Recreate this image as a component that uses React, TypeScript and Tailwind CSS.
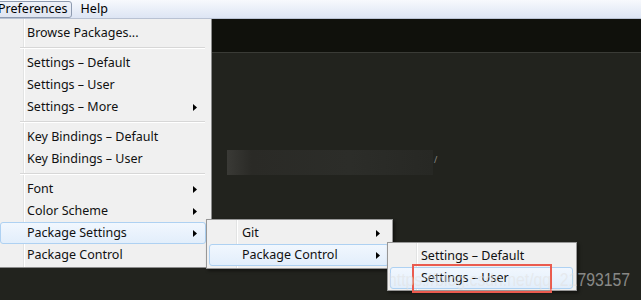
import React from "react";

type Item =
  | { kind: "item"; label: string; arrow?: boolean; active?: boolean }
  | { kind: "sep" };

function Arrow() {
  return (
    <svg width="4" height="7" viewBox="0 0 4 7" className="block">
      <path d="M0 0 L4 3.5 L0 7 Z" fill="#000" />
    </svg>
  );
}

function MenuRow({
  label,
  arrow,
  active,
  textLeft,
}: {
  label: string;
  arrow?: boolean;
  active?: boolean;
  textLeft: string;
}) {
  return (
    <div
      className={
        "relative h-[22px] flex items-center " +
        (active
          ? "rounded-[3px] border border-[#aed1f2] bg-[linear-gradient(#f1f7fe,#e2eefb)]"
          : "border border-transparent")
      }
    >
      <span className={"whitespace-nowrap text-[12.5px] text-[#111] " + textLeft}>{label}</span>
      {arrow && (
        <span className="ml-auto mr-[8px]">
          <Arrow />
        </span>
      )}
    </div>
  );
}

function Sep() {
  return (
    <div className="h-[8px] flex items-center pl-[20px] pr-[1px]">
      <div className="w-full">
        <div className="h-px bg-[#d7d7d7]" />
        <div className="h-px bg-white" />
      </div>
    </div>
  );
}

const mainItems: Item[] = [
  { kind: "item", label: "Browse Packages..." },
  { kind: "sep" },
  { kind: "item", label: "Settings – Default" },
  { kind: "item", label: "Settings – User" },
  { kind: "item", label: "Settings – More", arrow: true },
  { kind: "sep" },
  { kind: "item", label: "Key Bindings – Default" },
  { kind: "item", label: "Key Bindings – User" },
  { kind: "sep" },
  { kind: "item", label: "Font", arrow: true },
  { kind: "item", label: "Color Scheme", arrow: true },
  { kind: "item", label: "Package Settings", arrow: true, active: true },
  { kind: "item", label: "Package Control" },
];

export default function App() {
  return (
    <div
      className="relative w-[641px] h-[300px] overflow-hidden bg-[#22231e]"
      style={{ fontFamily: '"Noto Sans", "Open Sans", sans-serif' }}
    >
      {/* menu bar */}
      <div className="h-[19px] flex items-center bg-[linear-gradient(#f7f9fd,#dde5f4)] border-b border-[#b9c2d3]">
        <div className="ml-[-6px] h-[17px] px-[3px] flex items-center rounded-[3px] border border-[#8e9bb0] bg-[linear-gradient(#eef1f8,#dfe5f1)]">
          <span className="text-[12.5px] text-black leading-none">Preferences</span>
        </div>
        <span className="ml-[9px] text-[12.5px] text-black leading-none">Help</span>
      </div>

      {/* editor area */}
      <div className="flex">
        <div className="w-[212px] shrink-0" />
        <div className="flex-1">
          <div className="h-[34px] bg-[#10110c] border-b border-[#3a3b36]" />
          <div className="h-[247px] bg-[#22231e] pt-[97px] pl-[15px]">
            <div className="flex items-start">
              <div className="w-[206px] h-[25px] bg-[linear-gradient(90deg,#3a3a36,#2a2a26_12%,#2c2d29_60%,#272824)]" />
              <div className="ml-[1px] mt-[5px] text-[#8a8a86] text-[9px] leading-none">/</div>
            </div>
          </div>
        </div>
      </div>

      {/* main dropdown */}
      <div className="absolute left-[-3px] top-[19px] w-[215px] h-[249px] bg-[#f0f0f0] border-r border-b border-[#8c8c8c] pt-[3px] pl-[3px] pr-[5px]">
        <div className="absolute left-[26px] top-0 bottom-0 w-px bg-[#e2e3e3]" />
        <div className="absolute left-[27px] top-0 bottom-0 w-px bg-white" />
        <div className="relative">
          {mainItems.map((it, i) =>
            it.kind === "sep" ? (
              <Sep key={i} />
            ) : (
              <MenuRow key={i} label={it.label} arrow={it.arrow} active={it.active} textLeft="ml-[26px]" />
            )
          )}
        </div>
      </div>

      {/* submenu 1 */}
      <div className="absolute left-[206px] top-[219px] w-[187px] h-[50px] bg-[#f0f0f0] border border-[#979797] shadow-[2px_2px_3px_rgba(0,0,0,0.45)] pt-[2px] pl-[2px] pr-[3px]">
        <div className="absolute left-[29px] top-0 bottom-0 w-px bg-[#e2e3e3]" />
        <div className="absolute left-[30px] top-0 bottom-0 w-px bg-white" />
        <div className="relative">
          <MenuRow label="Git" arrow textLeft="ml-[32px]" />
          <MenuRow label="Package Control" arrow active textLeft="ml-[32px]" />
        </div>
      </div>

      {/* submenu 2 */}
      <div className="absolute left-[387px] top-[242px] w-[190px] h-[49px] bg-[#f0f0f0] border border-[#979797] shadow-[2px_2px_3px_rgba(0,0,0,0.45)] pt-[2px] pl-[2px] pr-[3px]">
        <div className="absolute left-[28px] top-0 bottom-0 w-px bg-[#e2e3e3]" />
        <div className="absolute left-[29px] top-0 bottom-0 w-px bg-white" />
        <div className="relative">
          <MenuRow label="Settings – Default" textLeft="ml-[30px]" />
          <MenuRow label="Settings – User" active textLeft="ml-[30px]" />
        </div>
      </div>

      {/* red highlight box */}
      <div className="absolute left-[412px] top-[264px] w-[140px] h-[29px] border-2 border-[#ea5b4f]" />

      {/* watermark */}
      <div
        className="absolute left-[388px] top-[270px] text-[19px] leading-none text-[rgba(225,225,225,0.55)] whitespace-nowrap origin-left scale-x-[0.83]"
        style={{ fontFamily: '"Liberation Sans", Arial, sans-serif' }}
      >
        https://blog.csdn.net/qq_21793157
      </div>
    </div>
  );
}
